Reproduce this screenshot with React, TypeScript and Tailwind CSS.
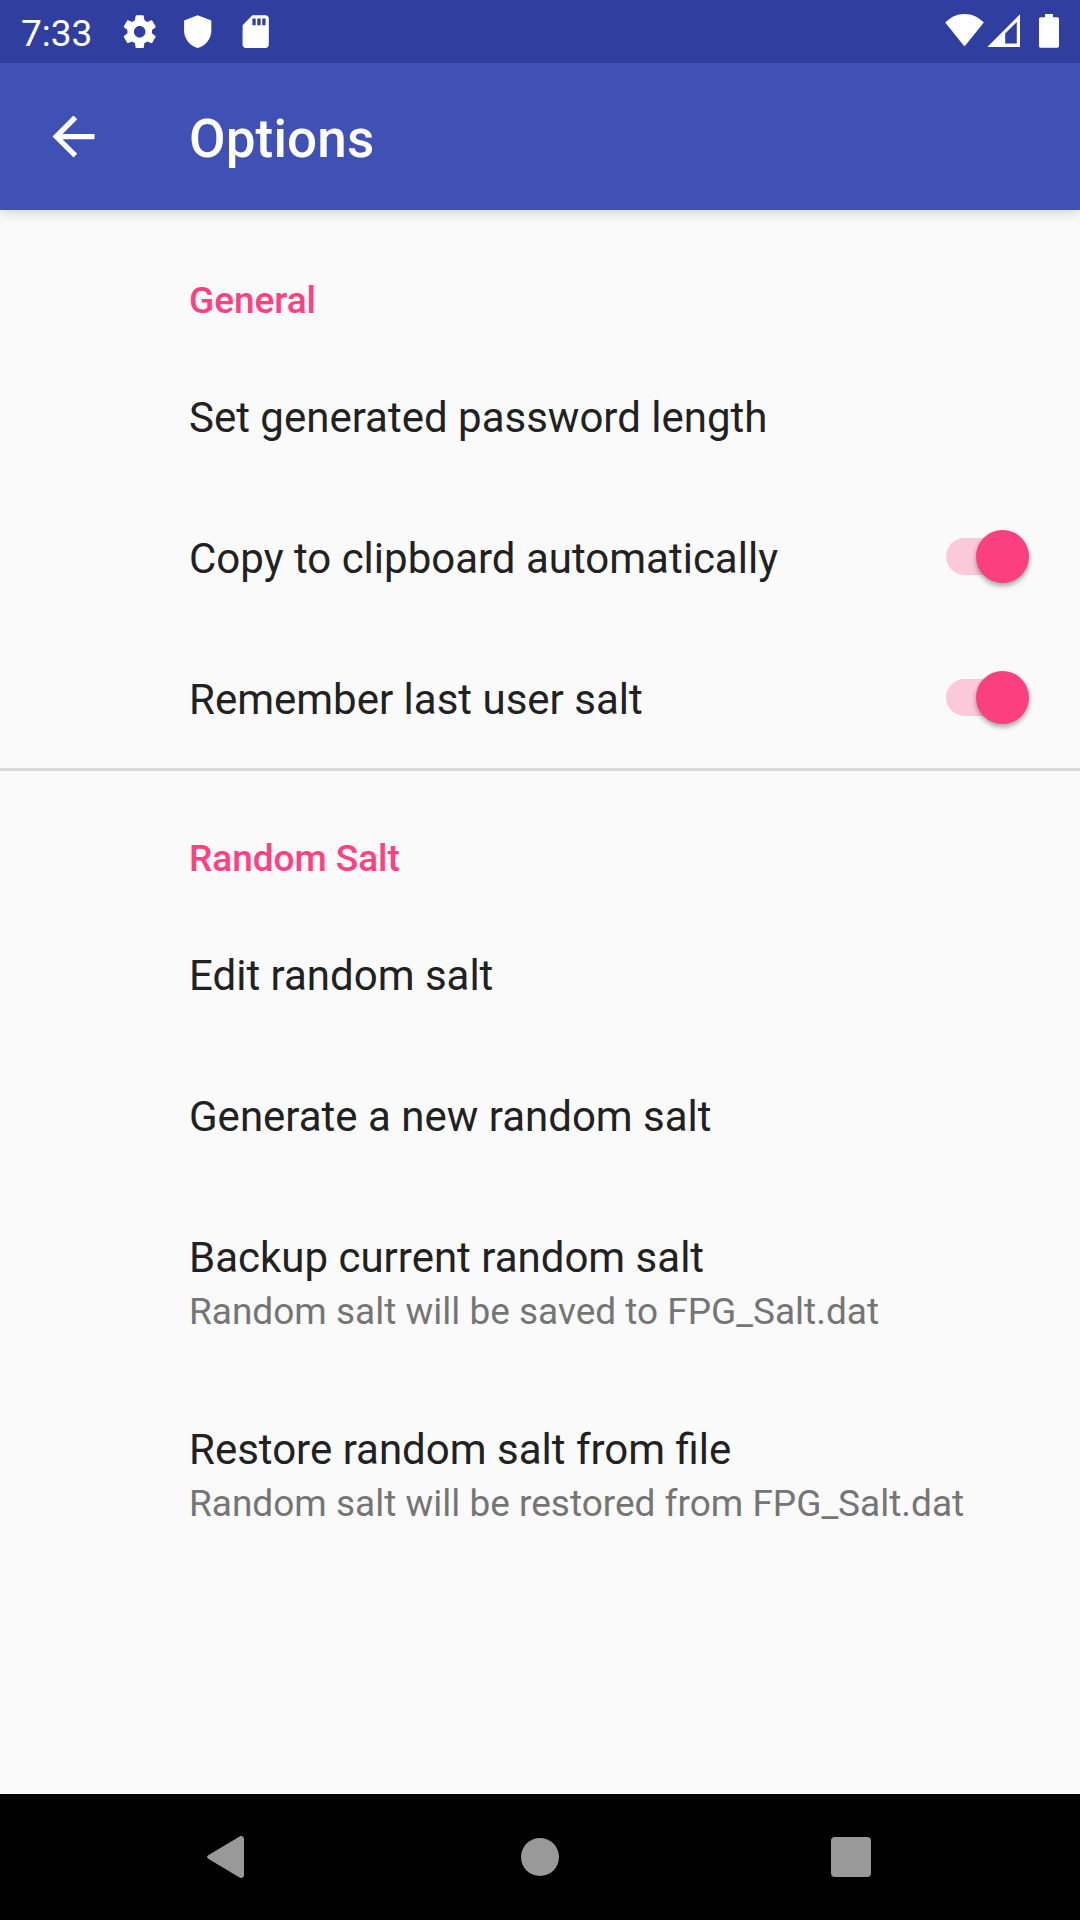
import React, { useState } from "react";

function StatusBar() {
  return (
    <div className="z-20 flex h-[63px] shrink-0 items-center justify-between bg-[#303f9f] pl-[21px] pr-[21px] text-white">
      <div className="flex items-center">
        <span className="w-[71px] pt-[3px] text-[37px] leading-[43px]">7:33</span>
        <svg className="ml-[28px] size-[39.4px]" viewBox="0 0 24 24" fill="currentColor">
          <path d="M19.43 12.98c.04-.32.07-.64.07-.98s-.03-.66-.07-.98l2.11-1.65c.19-.15.24-.42.12-.64l-2-3.46c-.12-.22-.39-.3-.61-.22l-2.49 1c-.52-.4-1.08-.73-1.69-.98l-.38-2.65C14.46 2.18 14.25 2 14 2h-4c-.25 0-.46.18-.49.42l-.38 2.65c-.61.25-1.17.59-1.69.98l-2.49-1c-.23-.09-.49 0-.61.22l-2 3.46c-.13.22-.07.49.12.64l2.11 1.65c-.04.32-.07.65-.07.98s.03.66.07.98l-2.11 1.65c-.19.15-.24.42-.12.64l2 3.46c.12.22.39.3.61.22l2.49-1c.52.4 1.08.73 1.69.98l.38 2.65c.03.24.24.42.49.42h4c.25 0 .46-.18.49-.42l.38-2.65c.61-.25 1.17-.59 1.69-.98l2.49 1c.23.09.49 0 .61-.22l2-3.46c.12-.22.07-.49-.12-.64l-2.11-1.65zM12 15.5c-1.93 0-3.5-1.57-3.5-3.5s1.57-3.5 3.5-3.5 3.5 1.57 3.5 3.5-1.57 3.5-3.5 3.5z" />
        </svg>
        <svg className="ml-[19px] size-[39.4px]" viewBox="0 0 24 24" fill="currentColor">
          <path d="M12 2L3.7 5.2v6.1c0 5 3.4 9.3 8.3 10.7 4.9-1.4 8.3-5.7 8.3-10.7V5.2L12 2z" />
        </svg>
        <svg className="ml-[18.5px] size-[39.4px]" viewBox="0 0 24 24" fill="currentColor">
          <path d="M18 2h-8L4.02 8 4 20c0 1.1.9 2 2 2h12c1.1 0 2-.9 2-2V4c0-1.1-.9-2-2-2zm-6 6h-2V4h2v4zm3 0h-2V4h2v4zm3 0h-2V4h2v4z" />
        </svg>
      </div>
      <div className="flex items-center pb-px">
        <svg className="h-[34px] w-[39px]" viewBox="0 0 39 34" fill="currentColor">
          <path d="M19.5 32.5L0.2 8.6C5.5 3.4 12 0 19.5 0s14 3.4 19.3 8.6L19.5 32.5z" />
        </svg>
        <svg className="ml-[3px] h-[34px] w-[33px]" viewBox="0 0 33 34" fill="currentColor">
          <path fillRule="evenodd" d="M33 0.3V33H0.3L33 0.3zM29.8 8L18.2 19.5V29.500h11.600V8z" />
        </svg>
        <svg className="ml-[19px] h-[34px] w-[20px]" viewBox="0 0 20 34" fill="currentColor">
          <path d="M6 0h8v3.300h4.200c1 0 1.800.8 1.800 1.800v26.800c0 1-.8 1.800-1.800 1.800H1.800c-1 0-1.800-.8-1.800-1.800V5.100c0-1 .8-1.800 1.800-1.800H6V0z" />
        </svg>
      </div>
    </div>
  );
}

function Toolbar() {
  return (
    <header className="z-10 flex h-[147px] shrink-0 items-center bg-[#3f51b5] pl-[42px] text-white shadow-[0_2px_12px_rgba(0,0,0,0.18)]">
      <button aria-label="Back" className="size-[63px]">
        <svg className="size-[63px]" viewBox="0 0 24 24" fill="currentColor">
          <path d="M20 11H7.830l5.590-5.590L12 4l-8 8 8 8 1.410-1.410L7.830 13H20v-2z" />
        </svg>
      </button>
      <h1 className="ml-[84px] pt-[5px] text-[53px] font-medium leading-[62px] tracking-[0.15px]">Options</h1>
    </header>
  );
}

function SectionTitle({ children }: { children: React.ReactNode }) {
  return (
    <h2 className="flex h-[135px] items-center pl-[189px] pt-[46px] text-[37px] font-medium leading-[43px] tracking-[-0.04px] text-[#ff4081]">
      {children}
    </h2>
  );
}

function Toggle() {
  const [on, setOn] = useState(true);
  return (
    <button
      role="switch"
      aria-checked={on}
      onClick={() => setOn(!on)}
      className={
        "flex h-[37px] w-[82.5px] items-center rounded-full " +
        (on ? "justify-end bg-[#fbc9da]" : "justify-start bg-[#b2b2b2]")
      }
    >
      <span
        className={
          "size-[52.5px] shrink-0 rounded-full shadow-[0_3px_5px_rgba(0,0,0,0.35)] " +
          (on ? "bg-[#fc407f]" : "bg-[#ececec]")
        }
      />
    </button>
  );
}

function Row({ title, toggle = false }: { title: string; toggle?: boolean }) {
  return (
    <div className="flex h-[141px] items-center justify-between pl-[189px] pr-[51.5px]">
      <span className="pt-[4px] text-[42px] leading-[49px] text-[#212121]">{title}</span>
      {toggle && <Toggle />}
    </div>
  );
}

function DetailRow({ title, detail }: { title: string; detail: string }) {
  return (
    <div className="flex h-[192px] flex-col pl-[189px] pt-[48px]">
      <span className="text-[42px] leading-[49px] text-[#212121]">{title}</span>
      <span className="mt-[8px] text-[37px] leading-[43px] text-[#757575]">{detail}</span>
    </div>
  );
}

function NavBar() {
  return (
    <nav className="flex h-[126px] shrink-0 items-center bg-black pl-[206px] text-[#999999]">
      <svg className="h-[42px] w-[38px]" viewBox="0 0 38 42" fill="currentColor">
        <path d="M2.200 19.200L33.600 0.500C35.500-.5 38 .5 38 3v36c0 2.500-2.500 3.500-4.400 2.500L2.200 22.800c-1.400-.9-1.400-2.700 0-3.600z" />
      </svg>
      <span className="ml-[277px] size-[38px] rounded-full bg-[#999999]" />
      <span className="ml-[272px] size-[40px] rounded-[4px] bg-[#999999]" />
    </nav>
  );
}

export default function App() {
  return (
    <div className="flex h-[1920px] w-[1080px] flex-col overflow-hidden bg-[#fafafa] font-['Roboto',sans-serif]">
      <StatusBar />
      <Toolbar />
      <main className="flex-1">
        <section className="h-[558px]">
          <SectionTitle>General</SectionTitle>
          <Row title="Set generated password length" />
          <Row title="Copy to clipboard automatically" toggle />
          <Row title="Remember last user salt" toggle />
        </section>
        <section>
          <div className="-mb-[3px] h-[3px] bg-[#dadada]" />
          <SectionTitle>Random Salt</SectionTitle>
          <Row title="Edit random salt" />
          <Row title="Generate a new random salt" />
          <DetailRow title="Backup current random salt" detail="Random salt will be saved to FPG_Salt.dat" />
          <DetailRow title="Restore random salt from file" detail="Random salt will be restored from FPG_Salt.dat" />
        </section>
      </main>
      <NavBar />
    </div>
  );
}
